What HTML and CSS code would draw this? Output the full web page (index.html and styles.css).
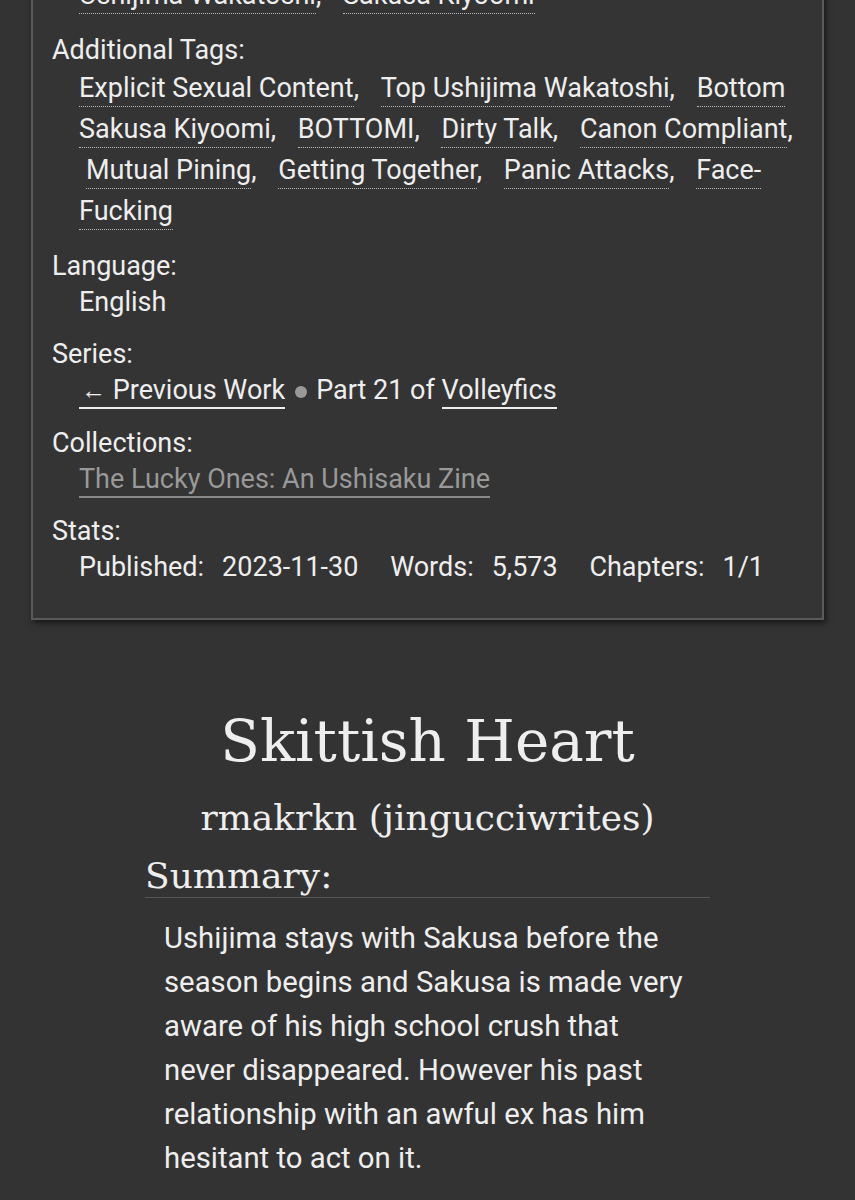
FILE: index.html
```html
<!DOCTYPE html>
<html lang="en">
  <head>
    <meta charset="UTF-8" />
    <meta name="viewport" content="width=device-width, initial-scale=1.0" />
    <title>Skittish Heart</title>
    <link rel="stylesheet" href="styles.css">
  </head>
  <body>
    <div class="wrapper">
      <dl class="work meta">
        <dt>Characters:</dt>
        <dd>
          <ul class="tags commas">
            <li><a class="tag" href="#">Ushijima Wakatoshi</a></li>
            <li><a class="tag" href="#">Sakusa Kiyoomi</a></li>
          </ul>
        </dd>

        <dt>Additional Tags:</dt>
        <dd>
          <ul class="tags commas">
            <li><a class="tag" href="#">Explicit Sexual Content</a></li>
            <li><a class="tag" href="#">Top Ushijima Wakatoshi</a></li>
            <li><a class="tag" href="#">Bottom Sakusa Kiyoomi</a></li>
            <li><a class="tag" href="#">BOTTOMI</a></li>
            <li><a class="tag" href="#">Dirty Talk</a></li>
            <li><a class="tag" href="#">Canon Compliant</a></li>
            <li><a class="tag" href="#">Mutual Pining</a></li>
            <li><a class="tag" href="#">Getting Together</a></li>
            <li><a class="tag" href="#">Panic Attacks</a></li>
            <li><a class="tag" href="#">Face-Fucking</a></li>
          </ul>
        </dd>

        <dt>Language:</dt>
        <dd>English</dd>

        <dt>Series:</dt>
        <dd>
          <a class="series" href="#"><span class="arrow">&larr;</span> Previous Work</a><span class="divider"></span>Part 21 of <a class="series" href="#">Volleyfics</a>
        </dd>

        <dt>Collections:</dt>
        <dd><a class="collection" href="#">The Lucky Ones: An Ushisaku Zine</a></dd>

        <dt>Stats:</dt>
        <dd>
          <dl class="stats">
            <dt>Published:</dt><dd>2023-11-30</dd>
            <dt>Words:</dt><dd>5,573</dd>
            <dt>Chapters:</dt><dd>1/1</dd>
          </dl>
        </dd>
      </dl>

      <div class="preface">
        <h2 class="title">Skittish Heart</h2>
        <h3 class="byline">rmakrkn (jingucciwrites)</h3>
        <div class="summary">
          <h3 class="heading">Summary:</h3>
          <blockquote class="userstuff">
            <p>Ushijima stays with Sakusa before the season begins and Sakusa is made very aware of his high school crush that never disappeared. However his past relationship with an awful ex has him hesitant to act on it.</p>
          </blockquote>
        </div>
      </div>
    </div>
  </body>
</html>
```

FILE: styles.css
```css
body {
  margin: 0;
  background-color: #333;
  color: #eee;
  font-family: Roboto, "Liberation Sans", sans-serif;
}
a {
  color: #eee;
  text-decoration: none;
}
.wrapper {
  overflow: hidden;
}

/* work meta box */
.meta {
  margin: -79px 31px 0;
  padding: 16px 17px 33px 19px;
  background-color: #343434;
  border: 2px solid #5a5a5a;
  box-shadow: 2px 3px 6px rgba(0, 0, 0, 0.55);
  font-size: 27px;
  line-height: 36px;
}
.meta > dt {
  margin: 0;
}
.meta > dd {
  margin: 0 0 16px 27px;
}
.meta > dd:last-child {
  margin-bottom: 0;
}

.tags {
  margin: 0;
  padding: 0;
  list-style: none;
  line-height: 41px;
}
.tags li {
  display: inline;
}
.tags li + li {
  padding-left: 7px;
}
.commas li::after {
  content: ",";
  margin-right: 8px;
}
.commas li:last-child::after {
  content: "";
  margin-right: 0;
}
.tag {
  border-bottom: 1px dotted #bbb;
  padding-bottom: 2px;
}

.series {
  border-bottom: 2px solid #eee;
  padding-bottom: 1px;
}
.arrow {
  font-size: 25px;
  margin-left: 2px;
}
.divider {
  display: inline-block;
  width: 12px;
  height: 12px;
  margin: 0 9px 0 10px;
  border-radius: 50%;
  background-color: #999;
  vertical-align: 1px;
}
.collection {
  color: #999;
  border-bottom: 2px solid #888;
  padding-bottom: 1px;
}

.stats {
  margin: 0;
}
.stats dt,
.stats dd {
  display: inline;
  margin: 0;
}
.stats dt {
  margin-right: 18px;
}
.stats dd {
  margin-right: 25px;
}

/* preface */
.preface {
  padding: 85px 145px 40px;
}
.title {
  margin: 0;
  text-align: center;
  font-family: "DejaVu Serif", "Liberation Serif", serif;
  font-weight: normal;
  font-size: 58px;
  line-height: 72px;
}
.byline {
  margin: 15px 0 0;
  text-align: center;
  font-family: "DejaVu Serif", "Liberation Serif", serif;
  font-weight: normal;
  font-size: 36px;
  line-height: 52px;
}
.summary .heading {
  margin: 11px 0 0;
  font-family: "DejaVu Serif", "Liberation Serif", serif;
  font-weight: normal;
  font-size: 36px;
  line-height: 42px;
  border-bottom: 1px solid #555;
}
.userstuff {
  margin: 18px 20px 0 19px;
  font-size: 29.3px;
  line-height: 44px;
}
.userstuff p {
  margin: 0;
}
```
